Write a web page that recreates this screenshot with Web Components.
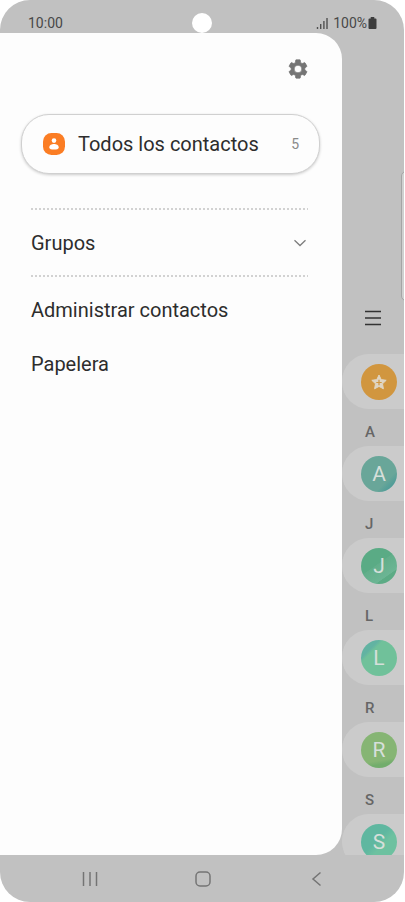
<!DOCTYPE html>
<html lang="es">
<head>
<meta charset="utf-8">
<meta name="viewport" content="width=device-width, initial-scale=1">
<title>Contactos</title>
<style>
body { margin: 0; background: #fff; font-family: Roboto, "Liberation Sans", sans-serif; color: #2d2d2d; }
</style>
</head>
<body>
<phone-shell>
  <status-bar slot="status" time="10:00" battery="100%"></status-bar>
  <contacts-drawer slot="drawer">
    <all-contacts count="5">Todos los contactos</all-contacts>
    <drawer-item class="ruled" expandable>Grupos</drawer-item>
    <drawer-item>Administrar contactos</drawer-item>
    <drawer-item>Papelera</drawer-item>
  </contacts-drawer>
  <contacts-peek slot="peek">
    <contact-row favourite style="--avatar:#d1963f"></contact-row>
    <contact-row letter="A" style="--avatar:linear-gradient(135deg,#69a699 70%,#4f9c98 85%)"></contact-row>
    <contact-row letter="J" style="--avatar:linear-gradient(145deg,#5aab85 45%,#62ae8a 46%,#6cb594 75%,#5cab85 76%)"></contact-row>
    <contact-row letter="L" style="--avatar:linear-gradient(135deg,#62b3a2 25%,#70c19a 32%)"></contact-row>
    <contact-row letter="R" style="--avatar:linear-gradient(170deg,#86b574 75%,#72ad6c 85%)"></contact-row>
    <contact-row letter="S" style="--avatar:linear-gradient(135deg,#5fb7a0 45%,#6dc1a0 60%)"></contact-row>
  </contacts-peek>
  <nav-bar slot="nav"></nav-bar>
</phone-shell>

<script>
function define(name, render) {
  customElements.define(name, class extends HTMLElement {
    constructor() {
      super();
      this.attachShadow({ mode: 'open' });
    }
    connectedCallback() {
      this.shadowRoot.innerHTML = render(this);
    }
  });
}

define('phone-shell', () => `
<style>
:host { display: grid; grid-template: 33px minmax(0, 1fr) 47px / minmax(0, 1fr) 62px; height: 100vh; margin-right: 1px; background: #c1c1c1; border-radius: 30px; overflow: hidden; }
slot[name=status]::slotted(*), slot[name=nav]::slotted(*) { grid-column: 1 / -1; }
</style>
<slot name="status"></slot><slot name="drawer"></slot><slot name="peek"></slot><slot name="nav"></slot>`);

define('status-bar', el => `
<style>
:host { display: grid; grid-template-columns: 1fr 20px 1fr; align-items: end; padding: 0 28px; font-size: 14px; line-height: 20px; color: #484848; }
.camera { width: 20px; height: 20px; border-radius: 50%; background: #fff; }
.right { display: flex; justify-content: flex-end; align-items: center; margin-right: -2px; }
.signal { margin-right: 5px; }
</style>
<span>${el.getAttribute('time')}</span>
<span class="camera"></span>
<span class="right">
  <svg class="signal" width="12" height="13" viewBox="0 0 12 13" stroke="#505050" stroke-width="1.4" aria-hidden="true"><path d="M1.500 10v2M4.700 7v5M7.900 4v8M11 1v11"/></svg>
  <span>${el.getAttribute('battery')}</span>
  <svg width="11" height="14" viewBox="0 0 11 14" fill="#3d3d3d" aria-hidden="true"><path d="M3.700 1h3.600v1.500h1.200q1 0 1 1v8.500q0 1-1 1h-6q-1 0-1-1V3.500q0-1 1-1h1.200z"/></svg>
</span>`);

define('contacts-drawer', () => `
<style>
:host { display: block; background: #fdfdfd; border-radius: 0 26px 26px 0; padding: 21px 22px 0 21px; }
header { display: flex; justify-content: flex-end; padding-right: 7px; }
button { width: 30px; height: 30px; padding: 4px; border: 0; background: none; }
svg { display: block; }
</style>
<header><button type="button" aria-label="Ajustes"><svg width="22" height="22" viewBox="0 0 24 24" fill="#757575" stroke="#757575" stroke-width="0.800" stroke-linejoin="round"><path d="M19.430 12.980c.040-.320.070-.640.070-.980s-.030-.660-.070-.980l2.110-1.650c.190-.150.240-.420.120-.640l-2-3.460c-.120-.220-.390-.300-.610-.220l-2.490 1c-.520-.400-1.080-.730-1.690-.980l-.380-2.650C14.460 2.180 14.250 2 14 2h-4c-.250 0-.460.180-.490.420l-.380 2.650c-.610.250-1.170.590-1.690.980l-2.490-1c-.230-.090-.490 0-.610.220l-2 3.460c-.130.220-.070.490.120.640l2.110 1.650c-.040.320-.070.650-.070.980s.030.660.070.980l-2.110 1.650c-.190.150-.240.420-.120.640l2 3.460c.120.220.390.300.610.220l2.490-1c.520.400 1.080.730 1.690.980l.380 2.650c.030.240.240.420.490.420h4c.250 0 .460-.180.490-.420l.380-2.650c.610-.250 1.170-.590 1.690-.980l2.490 1c.230.090.490 0 .610-.220l2-3.460c.120-.220.070-.490-.120-.640l-2.110-1.650zM12 16.200a4.200 4.200 0 1 1 0-8.400 4.200 4.200 0 0 1 0 8.400z"/></svg></button></header>
<slot></slot>`);

define('all-contacts', el => `
<style>
:host { display: block; margin: 30px 0 34px; }
button { display: flex; align-items: center; gap: 13px; box-sizing: border-box; width: 100%; height: 60px; padding: 0 20px 0 21px; border: 1px solid #d0d0d0; border-radius: 28px; background: #fdfdfd; box-shadow: 0 1px 3px #0003; font: inherit; font-size: 20px; color: inherit; }
.label { flex: 1; text-align: left; }
.count { font-size: 14px; color: #8a8a8a; }
</style>
<button type="button">
  <svg width="22" height="22" viewBox="0 0 22 22" aria-hidden="true"><rect width="22" height="22" rx="8.500" fill="#fb7d24"/><circle cx="11" cy="7.600" r="2.300" fill="#fff"/><path d="M6.300 14.400c0-2.300 2.500-3.300 4.700-3.300s4.700 1 4.700 3.300c0 1.500-2.200 2.200-4.700 2.200s-4.700-.7-4.700-2.200z" fill="#fff"/></svg>
  <span class="label"><slot></slot></span><span class="count">${el.getAttribute('count')}</span>
</button>`);

define('drawer-item', el => `
<style>
:host { display: block; margin: 0 12px 0 10px; }
:host(.ruled) { --rule: linear-gradient(90deg, #d2d2d2 2px, #0000 2px); background: var(--rule) 0 0 / 4px 2px repeat-x, var(--rule) 0 100% / 4px 2px repeat-x; padding: 8px 0 7px; margin-bottom: 6px; }
button { display: flex; align-items: center; justify-content: space-between; width: 100%; height: 54px; padding: 0 1px 0 0; border: 0; background: none; font: inherit; font-size: 20px; color: inherit; }
</style>
<button type="button"${el.hasAttribute('expandable') ? ' aria-expanded="false"' : ''}><span><slot></slot></span>
${el.hasAttribute('expandable') ? '<svg width="14" height="8" viewBox="0 0 14 8" fill="none" stroke="#7d7d7d" stroke-width="1.300" aria-hidden="true"><path d="M1.500 1.200 7 6.500l5.500-5.300"/></svg>' : ''}</button>`);

define('contacts-peek', () => `
<style>
:host { display: block; position: relative; overflow: hidden; }
.edge { position: absolute; top: 138px; right: -8px; width: 9px; height: 128px; border: 1px solid #a5a5a5; border-radius: 5px; background: #d0d0d0; }
button { display: block; margin: 270px 0 21px 16px; padding: 7px; border: 0; background: none; }
svg { display: block; }
</style>
<span class="edge"></span>
<button type="button" aria-label="Menú"><svg width="16" height="16" viewBox="0 0 16 16" stroke="#333" stroke-width="1.500"><path d="M0 1.500h16M0 8h16M0 14.500h16"/></svg></button>
<slot></slot>`);

define('contact-row', el => {
  const letter = el.getAttribute('letter');
  return `
<style>
:host { display: block; }
h2 { box-sizing: border-box; margin: 0; padding: 10px 0 0 23px; font-size: 15px; font-weight: 500; line-height: 27px; height: 37px; color: #666; }
.pill { display: flex; align-items: center; height: 55px; padding-left: 19px; background: #cbcbcb; border-radius: 27px 0 0 27px; }
.avatar { display: grid; place-items: center; width: 36px; height: 36px; border-radius: 50%; background: var(--avatar); color: #d6dfda; font-size: 21px; line-height: 36px; }
</style>
${letter ? `<h2>${letter}</h2>` : ''}
<div class="pill"><span class="avatar">${letter ? letter : '<svg width="18" height="18" viewBox="0 0 18 18" role="img" aria-label="Favoritos"><path d="M9 2l2.200 4.600 5 .7-3.700 3.500.9 5L9 13.400 4.600 15.800l.9-5L1.800 7.300l5-.7z" fill="#e0d5c2" stroke="#e0d5c2" stroke-linejoin="round"/><path d="M9 6.800v5.400M6.300 9.500h5.400" stroke="#d1963f" stroke-width="1.200"/></svg>'}</span></div>`;
});

define('nav-bar', () => `
<style>
:host { display: grid; grid-template-columns: repeat(3, 1fr); padding: 0 31px 0 33px; align-items: center; }
button { justify-self: center; padding: 6px; border: 0; background: none; }
svg { display: block; fill: none; stroke: #747474; stroke-width: 1.500; }
</style>
<button type="button" aria-label="Recientes"><svg width="16" height="16" viewBox="0 0 16 16"><path d="M1.500 1v14M8 1v14M14.500 1v14"/></svg></button>
<button type="button" aria-label="Inicio"><svg width="16" height="16" viewBox="0 0 16 16"><rect x="1" y="1" width="14" height="14" rx="4"/></svg></button>
<button type="button" aria-label="Atrás"><svg width="16" height="16" viewBox="0 0 16 16"><path d="M12.500 1.500 5 8l7.500 6.500"/></svg></button>`);
</script>
</body>
</html>
